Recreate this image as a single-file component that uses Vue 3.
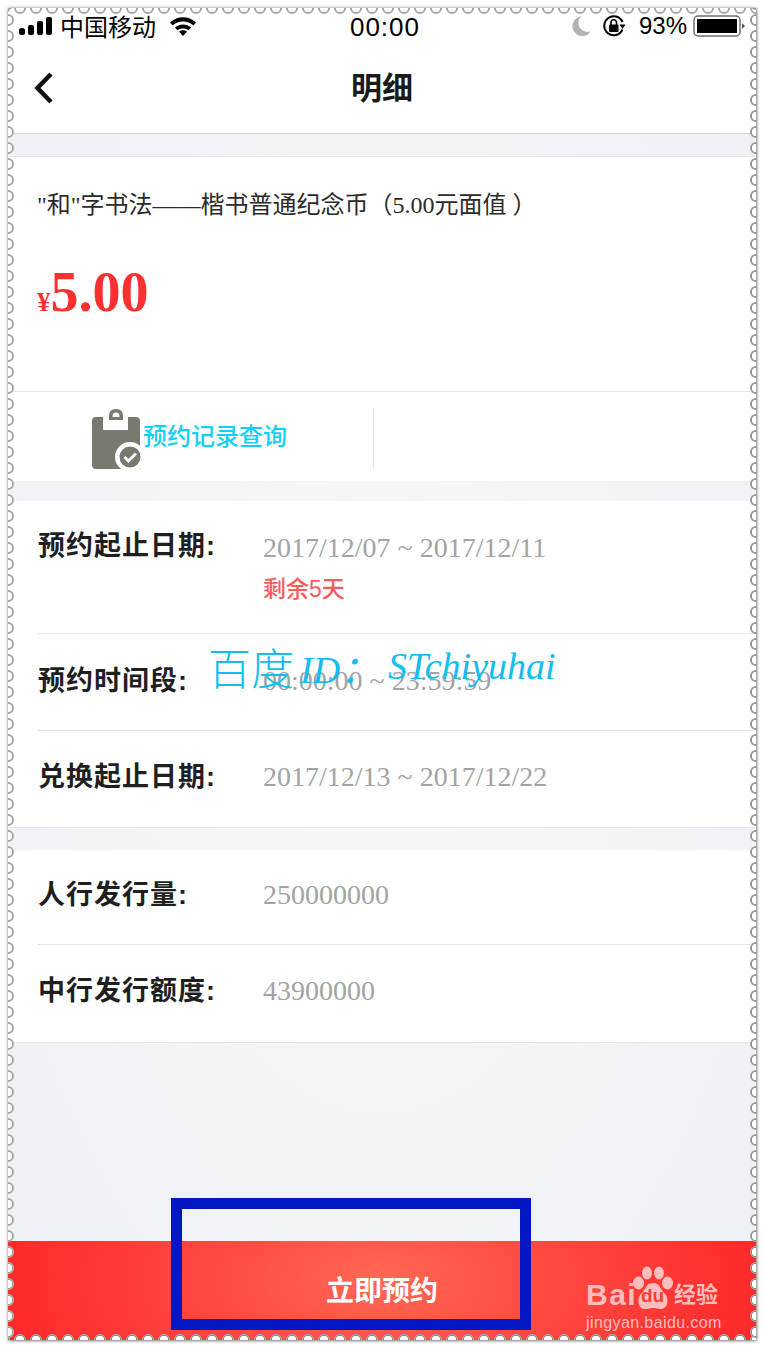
<script setup>
const groupOne = [
  { label: '预约时间段:', value: '00:00:00 ~ 23:59:59', cls: 'row-time' },
  { label: '兑换起止日期:', value: '2017/12/13 ~ 2017/12/22', cls: 'row-swap' }
]
const groupTwo = [
  { label: '人行发行量:', value: '250000000', cls: 'row-issue' },
  { label: '中行发行额度:', value: '43900000', cls: 'row-quota' }
]
</script>

<template>
  <div class="page">
    <div class="frame">
      <div class="status">
        <div class="status-left">
          <svg class="signal" width="34" height="18" viewBox="0 0 34 18">
            <rect x="0" y="11" width="6" height="7" rx="2.5" fill="#000" />
            <rect x="9" y="8" width="6" height="10" rx="2" fill="#000" />
            <rect x="18" y="4" width="6" height="14" rx="2" fill="#000" />
            <rect x="27" y="0" width="6" height="18" rx="2" fill="#000" />
          </svg>
          <span class="carrier">中国移动</span>
          <svg class="wifi" width="28" height="20" viewBox="0 0 28 20">
            <path d="M1 6.500C8.500 -0.500 19.500 -0.500 27 6.500L24.500 9.500C18.500 4 9.500 4 3.500 9.500Z" fill="#000" />
            <path d="M6 11.500C10.500 7.500 17.500 7.500 22 11.500L19.500 14.300C16.500 11.800 11.500 11.800 8.500 14.300Z" fill="#000" />
            <path d="M10 15.500C12.300 13.800 15.700 13.800 18 15.500L14 20Z" fill="#000" />
          </svg>
        </div>
        <div class="clock">00:00</div>
        <div class="status-right">
          <svg width="20" height="22" viewBox="0 0 20 22">
            <path d="M10 1C3.500 3 1 8 1.500 12.500C2.500 18 7 21 11 21C14.500 21 17.500 19.500 19.500 16.500C13.500 18 8 14 7.500 9C7.200 6 8 3.500 10 1Z" fill="#b1b4ae" />
          </svg>
          <svg class="lock" width="24" height="24" viewBox="0 0 24 24">
            <path d="M20.500 15.500A9.500 9.500 0 1 1 20.500 8" fill="none" stroke="#000" stroke-width="2" />
            <path d="M17.500 9.500L23.500 9.500L20.500 14Z" fill="#000" transform="translate(0 1)" />
            <rect x="7" y="10.500" width="9.500" height="7.500" rx="1" fill="#000" />
            <path d="M9 11V8.500a2.700 2.700 0 0 1 5.500 0V11" fill="none" stroke="#000" stroke-width="1.600" />
          </svg>
          <span class="percent">93%</span>
          <svg class="battery" width="52" height="22" viewBox="0 0 52 22">
            <rect x="1" y="1" width="46" height="20" rx="4" fill="#fff" stroke="#6d6d6d" stroke-width="1.500" />
            <rect x="4" y="4" width="40" height="14" fill="#000" />
            <path d="M49 8L52 11L49 14Z" fill="#555" />
          </svg>
        </div>
      </div>

      <div class="nav">
        <svg class="back" width="22" height="34" viewBox="0 0 22 34">
          <path d="M18 3L4.500 17L18 31" fill="none" stroke="#111" stroke-width="4.500" />
        </svg>
        <span class="nav-title">明细</span>
      </div>

      <div class="gap"></div>

      <section class="card product">
        <p class="product-name">"和"字书法——楷书普通纪念币（5.00元面值 ）</p>
        <p class="price"><small>¥</small>5.00</p>
      </section>

      <section class="card actions">
        <div class="action">
          <svg width="52" height="61" viewBox="0 0 52 61">
            <path d="M4 9H11V22H36V9H44Q48 9 48 13V61H4Q0 61 0 57V13Q0 9 4 9Z" fill="#777a6e" />
            <path d="M17 12V8Q17 1 24 1Q31 1 31 8V12ZM20.500 9H27.500V8Q27.500 4.500 24 4.500Q20.500 4.500 20.500 8Z" fill="#777a6e" fill-rule="evenodd" />
            <circle cx="38" cy="49" r="15" fill="#fff" />
            <circle cx="38" cy="49" r="10.500" fill="#777a6e" />
            <path d="M32.500 49L36.500 53L44 45.500" fill="none" stroke="#fff" stroke-width="3" />
          </svg>
          <span class="action-text">预约记录查询</span>
        </div>
        <div class="divider"></div>
      </section>

      <div class="gap gap-plain"></div>

      <section class="card rows">
        <div class="row row-date">
          <span class="label">预约起止日期:</span>
          <div class="value-wrap">
            <span class="value">2017/12/07 ~ 2017/12/11</span>
            <span class="remain">剩余5天</span>
          </div>
        </div>
        <div v-for="row in groupOne" :key="row.label" class="row" :class="row.cls">
          <span class="label">{{ row.label }}</span>
          <span class="value">{{ row.value }}</span>
        </div>
      </section>

      <div class="gap"></div>

      <section class="card rows">
        <div v-for="row in groupTwo" :key="row.label" class="row" :class="row.cls">
          <span class="label">{{ row.label }}</span>
          <span class="value">{{ row.value }}</span>
        </div>
      </section>

      <div class="submit">
        <span>立即预约</span>
        <div class="logo">
          <div class="logo-top">
            <span class="logo-bai">Bai</span>
            <span class="paw">
              <svg width="42" height="44" viewBox="0 0 42 44">
                <ellipse cx="15" cy="7" rx="5" ry="6.500" fill="#ffbdbd" />
                <ellipse cx="27" cy="7" rx="5" ry="6.500" fill="#ffbdbd" />
                <ellipse cx="6.500" cy="17" rx="5.500" ry="6.500" fill="#ffbdbd" />
                <ellipse cx="35.500" cy="17" rx="5.500" ry="6.500" fill="#ffbdbd" />
                <path d="M21 17C28 17 28 23 32 27C38 32 36 43 29 43C25 43 24 42 21 42C18 42 17 43 13 43C6 43 4 32 10 27C14 23 14 17 21 17Z" fill="#ffbdbd" />
              </svg>
              <span class="paw-du">du</span>
            </span>
            <span class="logo-jy">经验</span>
          </div>
          <div class="logo-url">jingyan.baidu.com</div>
        </div>
      </div>

      <div class="perf perf-top"></div>
      <div class="perf perf-bottom"></div>
      <div class="perf perf-left"></div>
      <div class="perf perf-right"></div>
    </div>

    <div class="watermark"><span class="wm-cn">百度</span><span class="wm-en">ID：</span><span class="wm-id">STchiyuhai</span></div>
    <div class="highlight"></div>
  </div>
</template>

<style>
html,
body {
  margin: 0;
  background: #fff;
}
</style>

<style scoped>
.page {
  position: relative;
  width: 764px;
  height: 1348px;
  box-sizing: border-box;
  padding: 8px;
  overflow: hidden;
  font-family: 'Liberation Sans', 'Noto Sans CJK SC', sans-serif;
}

.frame {
  position: relative;
  height: 1332px;
  display: flex;
  flex-direction: column;
  background: radial-gradient(ellipse at 50% 50%, #f7f8fa 0%, #eef1f4 100%);
  box-shadow: 0 0 3px rgba(0, 0, 0, 0.4), 1px 1px 3px rgba(0, 0, 0, 0.35);
}

.status {
  height: 40px;
  flex: none;
  display: grid;
  grid-template-columns: 1fr auto 1fr;
  align-items: center;
  padding: 0 11px 6px;
  background: #fff;
  color: #000;
  box-sizing: border-box;
}

.status-left,
.status-right {
  display: flex;
  align-items: center;
}

.status-right {
  justify-content: flex-end;
}

.carrier {
  margin-left: 7px;
  font-size: 24px;
}

.wifi {
  margin-left: 13px;
}

.clock {
  margin: 3px 0 0 6px;
  font-size: 26px;
  letter-spacing: 1px;
}

.lock {
  margin-left: 11px;
}

.percent {
  margin: 1px 0 0 13px;
  font-size: 24px;
}

.battery {
  margin-left: 6px;
}

.nav {
  position: relative;
  height: 86px;
  flex: none;
  box-sizing: border-box;
  padding-bottom: 11px;
  display: flex;
  align-items: center;
  justify-content: center;
  background: #fff;
  border-bottom: 1px solid #d6d8d6;
}

.back {
  position: absolute;
  left: 25px;
  top: 23px;
}

.nav-title {
  font-size: 31px;
  font-weight: 700;
  color: #1a1a1a;
}

.gap {
  height: 22px;
  flex: none;
}

.gap-plain {
  height: 20px;
}

.card {
  background: #fff;
  flex: none;
}

.product {
  height: 236px;
  box-sizing: border-box;
  padding: 32px 29px 0;
  border-top: 1px solid #e6e6ee;
  border-bottom: 1px solid #e6e6ee;
}

.product-name {
  margin: 0;
  font-family: 'Liberation Serif', 'Noto Sans CJK SC', serif;
  font-size: 24px;
  line-height: 32px;
  color: #2b2b2b;
}

.price {
  margin: 39px 0 0;
  font-family: 'Liberation Serif', serif;
  font-weight: 700;
  font-size: 56px;
  line-height: 64px;
  color: #fb3030;
}

.price small {
  font-size: 27px;
}

.actions {
  height: 89px;
  display: flex;
  align-items: center;
}

.action {
  width: 365px;
  box-sizing: border-box;
  padding: 3px 0 0 84px;
  display: flex;
  align-items: center;
}

.action-text {
  margin-bottom: 7px;
  margin-left: -1px;
  font-size: 24px;
  font-weight: 500;
  color: #10d0f6;
}

.divider {
  width: 1px;
  height: 60px;
  margin-top: 3px;
  background: #e4e4ec;
}

.rows {
  border-top: 0 solid #e6e6ee;
  border-bottom: 1px solid #e6e6ee;
}

.row {
  margin-left: 30px;
  height: 97px;
  box-sizing: border-box;
  display: grid;
  grid-template-columns: 225px 1fr;
  align-items: center;
  border-bottom: 1px solid #e6e6ee;
}

.row:last-child {
  border-bottom: 0;
}

.row-date {
  height: 133px;
  align-items: start;
  padding-top: 27px;
}

.row-time {
  padding-bottom: 2px;
}

.row-swap {
  height: 96px;
  padding-bottom: 4px;
}

.row-issue {
  height: 95px;
  padding-bottom: 4px;
}

.row-quota {
  height: 97px;
  padding-bottom: 6px;
}

.label {
  font-size: 27px;
  font-weight: 700;
  line-height: 36px;
  letter-spacing: 1px;
  color: #1f1f1f;
}

.value {
  font-family: 'Liberation Serif', serif;
  font-size: 28px;
  line-height: 36px;
  color: #a3a3a3;
}

.value-wrap {
  display: flex;
  flex-direction: column;
  margin-top: 2px;
}

.remain {
  margin-top: 7px;
  font-size: 23px;
  font-weight: 500;
  line-height: 32px;
  color: #fb5a5a;
}

.submit {
  position: relative;
  margin-top: auto;
  height: 99px;
  flex: none;
  display: flex;
  align-items: center;
  justify-content: center;
  box-sizing: border-box;
  padding-bottom: 4px;
  background: radial-gradient(ellipse 370px 200px at 50% 40%, #ff6855 0%, #ff4a42 45%, #ff2b2b 100%);
  font-size: 28px;
  font-weight: 700;
  color: #fff;
}

.logo {
  position: absolute;
  left: 578px;
  top: 25px;
  width: 136px;
  font-weight: 400;
  color: #ffbdbd;
}

.logo-top {
  display: flex;
  align-items: flex-end;
  height: 44px;
}

.logo-bai {
  width: 46px;
  font-size: 30px;
  font-weight: 700;
  line-height: 30px;
  letter-spacing: 1.500px;
}

.paw {
  position: relative;
  width: 42px;
  height: 44px;
  flex: none;
}

.paw-du {
  position: absolute;
  left: 9px;
  bottom: 4px;
  font-size: 19px;
  line-height: 20px;
  font-weight: 700;
  color: #ff3a38;
}

.logo-jy {
  font-size: 22px;
  line-height: 30px;
  font-weight: 700;
  white-space: nowrap;
}

.logo-url {
  margin-top: 3px;
  font-size: 16px;
  line-height: 20px;
  letter-spacing: 0.400px;
  white-space: nowrap;
}

.perf {
  position: absolute;
  pointer-events: none;
}

.perf-top,
.perf-bottom {
  left: 0;
  right: 0;
  height: 7px;
  background-size: 16px 7px;
  background-repeat: repeat-x;
}

.perf-top {
  top: 0;
  background-position: 4px 0;
  background-image: radial-gradient(circle at 8px 0, #fff 0, #fff 4px, #9a9a9a 4.500px, #b4b4b4 5.500px, transparent 6.500px);
}

.perf-bottom {
  bottom: 0;
  background-position: 4px 0;
  background-image: radial-gradient(circle at 8px 7px, #fff 0, #fff 4px, #8a8a8a 4.500px, #a8a8a8 5.500px, transparent 6.500px);
}

.perf-left,
.perf-right {
  top: 0;
  bottom: 0;
  width: 7px;
  background-size: 7px 16px;
  background-repeat: repeat-y;
}

.perf-left {
  left: 0;
  background-position: 0 4px;
  background-image: radial-gradient(circle at 0 8px, #fff 0, #fff 4px, #9a9a9a 4.500px, #b4b4b4 5.500px, transparent 6.500px);
}

.perf-right {
  right: 0;
  background-position: 0 4px;
  background-image: radial-gradient(circle at 7px 8px, #fff 0, #fff 4px, #8a8a8a 4.500px, #a8a8a8 5.500px, transparent 6.500px);
}

.watermark {
  position: absolute;
  left: 208px;
  top: 638px;
  height: 56px;
  display: flex;
  align-items: center;
  color: #12bdf0;
  white-space: nowrap;
}

.wm-cn {
  font-size: 43px;
  font-weight: 300;
}

.wm-en {
  margin-left: 6px;
  font-family: 'Liberation Serif', 'Noto Sans CJK SC', serif;
  font-style: italic;
  font-size: 38px;
}

.wm-id {
  margin-left: 10px;
  font-family: 'Liberation Serif', serif;
  font-style: italic;
  font-size: 38px;
}

.highlight {
  position: absolute;
  left: 171px;
  top: 1198px;
  width: 360px;
  height: 132px;
  box-sizing: border-box;
  border: 11px solid #0318c4;
}
</style>
